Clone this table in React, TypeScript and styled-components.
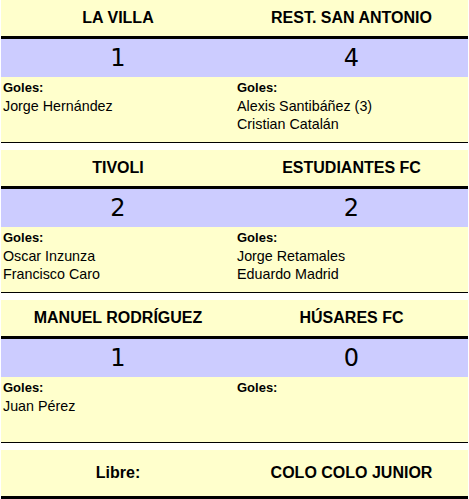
import React from "react";
import styled, { createGlobalStyle } from "styled-components";

const Global = createGlobalStyle`
  html, body { margin: 0; padding: 0; background: #ffffff; }
  body { font-family: "Liberation Sans", Arial, sans-serif; color: #000; }
`;

const Page = styled.div`
  width: 467px;
  margin-left: 1px;
  display: flex;
  flex-direction: column;
`;

const Match = styled.section`
  display: flex;
  flex-direction: column;
  border-bottom: 1px solid #000;
  margin-bottom: 7px;
`;

const Row = styled.div`
  display: grid;
  grid-template-columns: 234px 233px;
`;

const TeamRow = styled(Row)<{ $tall?: boolean }>`
  height: ${(p) => (p.$tall ? 46 : 36)}px;
  background: #ffffcc;
  border-bottom: 3px solid #000;
`;

const Team = styled.div`
  display: flex;
  align-items: center;
  justify-content: center;
  font-weight: bold;
  font-size: 16px;
`;

const ScoreRow = styled(Row)`
  height: 38px;
  background: #ccccff;
`;

const Score = styled.div`
  display: flex;
  align-items: center;
  justify-content: center;
  font-family: "DejaVu Sans", Verdana, sans-serif;
  font-size: 24px;
`;

const GoalsRow = styled(Row)`
  height: 65px;
  background: #ffffcc;
`;

const Goals = styled.div`
  padding: 2px 2px 0 2px;
  display: flex;
  flex-direction: column;
`;

const Label = styled.div`
  font-weight: bold;
  font-size: 13px;
  line-height: 18px;
`;

const Scorer = styled.div`
  font-size: 14.3px;
  line-height: 18px;
`;

type M = { home: string; away: string; hs: number; as: number; hg: string[]; ag: string[] };

const matches: M[] = [
  { home: "LA VILLA", away: "REST. SAN ANTONIO", hs: 1, as: 4, hg: ["Jorge Hernández"], ag: ["Alexis Santibáñez (3)", "Cristian Catalán"] },
  { home: "TIVOLI", away: "ESTUDIANTES FC", hs: 2, as: 2, hg: ["Oscar Inzunza", "Francisco Caro"], ag: ["Jorge Retamales", "Eduardo Madrid"] },
  { home: "MANUEL RODRÍGUEZ", away: "HÚSARES FC", hs: 1, as: 0, hg: ["Juan Pérez"], ag: [] },
];

export default function App() {
  return (
    <>
      <Global />
      <Page>
        {matches.map((m) => (
          <Match key={m.home}>
            <TeamRow>
              <Team>{m.home}</Team>
              <Team>{m.away}</Team>
            </TeamRow>
            <ScoreRow>
              <Score>{m.hs}</Score>
              <Score>{m.as}</Score>
            </ScoreRow>
            <GoalsRow>
              <Goals>
                <Label>Goles:</Label>
                {m.hg.map((g) => (
                  <Scorer key={g}>{g}</Scorer>
                ))}
              </Goals>
              <Goals>
                <Label>Goles:</Label>
                {m.ag.map((g) => (
                  <Scorer key={g}>{g}</Scorer>
                ))}
              </Goals>
            </GoalsRow>
          </Match>
        ))}
        <TeamRow $tall>
          <Team>Libre:</Team>
          <Team>COLO COLO JUNIOR</Team>
        </TeamRow>
      </Page>
    </>
  );
}
